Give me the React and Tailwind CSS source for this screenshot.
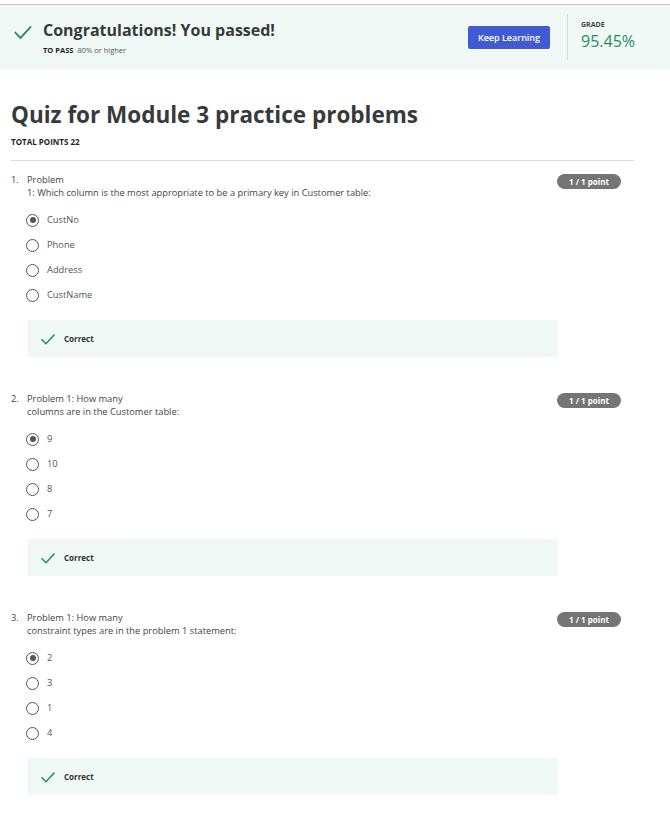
import React from 'react'

const questions = [
  {
    num: '1.',
    lines: ['Problem', '1: Which column is the most appropriate to be a primary key in Customer table:'],
    options: ['CustNo', 'Phone', 'Address', 'CustName'],
  },
  {
    num: '2.',
    lines: ['Problem 1: How many', 'columns are in the Customer table:'],
    options: ['9', '10', '8', '7'],
  },
  {
    num: '3.',
    lines: ['Problem 1: How many', 'constraint types are in the problem 1 statement:'],
    options: ['2', '3', '1', '4'],
  },
]

function Check({ className }) {
  return (
    <svg viewBox="0 0 24 24" className={className} fill="none" stroke="currentColor" strokeWidth={2.2} strokeLinecap="square">
      <path d="M3 13l6 6L21 6" />
    </svg>
  )
}

function Radio({ checked }) {
  return (
    <span className="w-[13px] h-[13px] rounded-full border-[1.5px] border-[#555] flex items-center justify-center shrink-0">
      {checked && <span className="w-[6px] h-[6px] rounded-full bg-[#555]" />}
    </span>
  )
}

function Question({ q }) {
  return (
    <div className="pb-[35px]">
      <div className="flex items-start justify-between">
        <div className="flex text-[9.3px] leading-[13px] text-[#444]">
          <span className="w-[16px]">{q.num}</span>
          <div>
            {q.lines.map((l, i) => (
              <div key={i}>{l}</div>
            ))}
          </div>
        </div>
        <span className="mr-[13px] mt-[1px] bg-[#757575] text-white text-[8px] font-bold rounded-full w-[64px] h-[15px] flex items-center justify-center">
          1 / 1 point
        </span>
      </div>
      <div className="pl-[15px] mt-[14px] flex flex-col gap-[11px]">
        {q.options.map((o, i) => (
          <div key={o} className="flex items-center gap-[8px] h-[14px] text-[9.3px] text-[#555]">
            <Radio checked={i === 0} />
            <span>{o}</span>
          </div>
        ))}
      </div>
      <div className="ml-[16px] mt-[18px] w-[531px] h-[37px] bg-[#f1f9f6] flex items-center pl-[13px] gap-[8px]">
        <Check className="w-[16px] h-[16px] text-[#1f8f5a]" />
        <span className="text-[8px] font-bold text-[#333]">Correct</span>
      </div>
    </div>
  )
}

export default function App() {
  return (
    <div className="min-h-screen bg-white font-['Open_Sans',sans-serif] text-[#333]">
      <div className="mt-[4px] border-t border-[#c4c4c4] bg-[#f1f9f6] h-[65px] flex items-start">
        <div className="flex items-start pl-[13px] pt-[14px] flex-1">
          <Check className="w-[20px] h-[20px] text-[#1f8f5a] mt-[3px]" />
          <div className="ml-[10px]">
            <div className="text-[16px] font-bold leading-[22px] text-[#373a3c]">Congratulations! You passed!</div>
            <div className="text-[7.5px] mt-[4px]">
              <span className="font-bold text-[#1f1f1f]">TO PASS</span>
              <span className="ml-[4px] text-[#555]">80% or higher</span>
            </div>
          </div>
        </div>
        <button className="mt-[21px] w-[82px] h-[23px] bg-[#4159d1] text-white text-[9px] font-semibold rounded-[2px]">
          Keep Learning
        </button>
        <div className="ml-[17px] mt-[9px] w-px h-[46px] bg-[#d9d9d9]" />
        <div className="pl-[13px] pt-[15px] w-[102px]">
          <div className="text-[7px] font-bold text-[#444]">GRADE</div>
          <div className="text-[16px] leading-[20px] text-[#1f8f5a]">95.45%</div>
        </div>
      </div>

      <div className="px-[11px] w-[645px]">
        <h1 className="mt-[30px] text-[22.5px] font-bold leading-[32px] text-[#373a3c]">Quiz for Module 3 practice problems</h1>
        <div className="mt-[5px] text-[8px] font-bold text-[#1f1f1f]">TOTAL POINTS 22</div>
        <div className="mt-[12px] h-px bg-[#dcdcdc]" />
        <div className="pt-[12px]">
          {questions.map((q) => (
            <Question key={q.num} q={q} />
          ))}
        </div>
      </div>
    </div>
  )
}
